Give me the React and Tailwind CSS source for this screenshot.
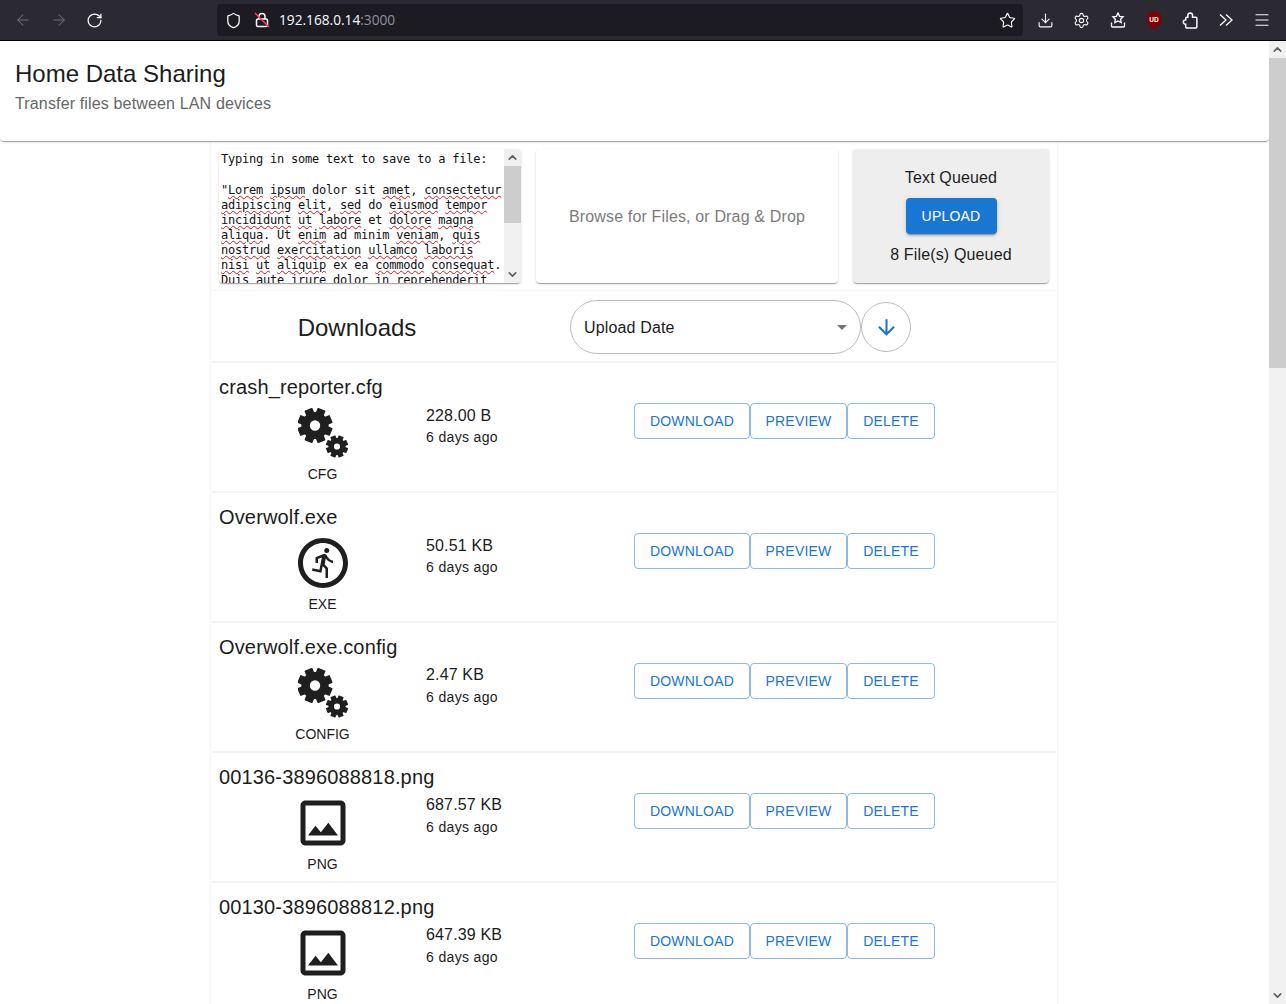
import React from "react";
import { ArrowLeft, ArrowRight, RotateCw, Shield, Star, Download, Settings, Menu, ChevronUp, ChevronDown } from "lucide-react";
import { MdOutlineImage, MdOutlineRunCircle, MdArrowDownward } from "react-icons/md";

const sans = "[font-family:'Liberation_Sans',Arial,sans-serif]";

function Gear({ cx, cy, r, hole, tooth }) {
  return (
    <g>
      {[0, 45, 90, 135, 180, 225, 270, 315].map((a) => (
        <rect key={a} x={cx - tooth / 2} y={cy - r - tooth * 0.46} width={tooth} height={tooth} rx={tooth * 0.1} transform={`rotate(${a + 22.5} ${cx} ${cy})`} fill="#1f1f1f" />
      ))}
      <circle cx={cx} cy={cy} r={(r + hole) / 2} fill="none" stroke="#1f1f1f" strokeWidth={r - hole} />
    </g>
  );
}

function Gears() {
  return (
    <svg width="50" height="50" viewBox="0 0 50 50">
      <Gear cx={17} cy={17.5} r={13.6} hole={5.2} tooth={8.5} />
      <Gear cx={39} cy={38.5} r={8.6} hole={3.1} tooth={5.4} />
    </svg>
  );
}

function Bar() {
  return (
    <div className="h-[41px] shrink-0 flex items-center bg-[#2b2a33] border-b border-black text-[#fbfbfe]">
      <div className="w-[217px] flex items-center pl-[14px] gap-[18px]">
        <ArrowLeft size={18} strokeWidth={1.4} className="text-[#6f6e76]" />
        <ArrowRight size={18} strokeWidth={1.4} className="text-[#6f6e76]" />
        <RotateCw size={17} strokeWidth={1.8} />
      </div>
      <div className="w-[806px] h-[32px] rounded-[4px] bg-[#1c1b22] flex items-center pl-[8px] pr-[7px]">
        <Shield size={17} strokeWidth={1.8} />
        <svg width="16" height="16" viewBox="0 0 16 16" fill="none" stroke="#fbfbfe" strokeWidth="1.5" className="ml-[12px]">
          <rect x="2.5" y="7" width="11" height="7.5" rx="1.5" />
          <path d="M5 7V4.5a3 3 0 0 1 6 0V7" />
          <path d="M1 1l14 14" stroke="#ff3b5c" />
        </svg>
        <span className="ml-[9px] mt-px text-[13.7px] [font-family:'Open_Sans','Liberation_Sans',sans-serif]">
          192.168.0.14<span className="text-[#8f8f9d]">:3000</span>
        </span>
        <Star size={17} strokeWidth={1.6} className="ml-auto" />
      </div>
      <div className="flex-1 flex items-center pl-[14px]">
        <Download size={17} strokeWidth={1.6} />
        <Settings size={17} strokeWidth={1.6} className="ml-[19px]" />
        <svg width="16" height="16" viewBox="0 0 16 16" fill="none" stroke="#fbfbfe" strokeWidth="1.3" className="ml-[20px]">
          <path d="M8 1l1.600 3.300 3.500.5-2.500 2.400.6 3.400L8 9l-3.200 1.600.6-3.400L2.900 4.800l3.500-.5z" />
          <path d="M1.500 10.500v3.500a1 1 0 0 0 1 1h11a1 1 0 0 0 1-1v-3.500" />
        </svg>
        <svg width="16" height="18" viewBox="0 0 16 18" className="ml-[20px]">
          <path d="M8 0l7 2.300v7.500c0 4-3.500 6.600-7 8.200-3.500-1.600-7-4.200-7-8.200V2.300z" fill="#800000" />
          <text x="8" y="10.500" textAnchor="middle" fontSize="6.500" fontWeight="700" fill="#fff" fontFamily="Liberation Sans">UD</text>
        </svg>
        <svg width="17" height="17" viewBox="0 0 16 16" fill="none" stroke="#fbfbfe" strokeWidth="1.4" className="ml-[20px]">
          <path d="M5.500 5V3.200a2.200 2.200 0 0 1 4.400 0V5H13a1 1 0 0 1 1 1v8a1 1 0 0 1-1 1H4.500a1 1 0 0 1-1-1v-2.500h-.3a2 2 0 0 1 0-4h.3V6a1 1 0 0 1 1-1z" />
        </svg>
        <svg width="16" height="16" viewBox="0 0 16 16" fill="none" stroke="#fbfbfe" strokeWidth="1.3" className="ml-[19px]">
          <path d="M2 2.500L8 8l-6 5.500M8 2.500L14 8l-6 5.500" />
        </svg>
        <Menu size={18} strokeWidth={1.6} className="ml-[19px]" />
      </div>
    </div>
  );
}

const W = ({ children }) => <span className="underline decoration-wavy decoration-[#e0101c] decoration-1 underline-offset-1">{children}</span>;

function Editor() {
  return (
    <div className="w-[302px] h-[134px] rounded-[4px] bg-white flex overflow-hidden shadow-[0_2px_1px_-1px_rgba(0,0,0,0.2),0_1px_1px_0_rgba(0,0,0,0.14),0_1px_3px_0_rgba(0,0,0,0.12)]">
      <div className="flex-1 pl-[2px] pt-[3px] text-[12px] tracking-[-0.22px] leading-[15px] whitespace-pre text-[#111] [font-family:'DejaVu_Sans_Mono',monospace] overflow-hidden">
        <div>Typing in some text to save to a file:</div>
        <div className="h-[16px]">&nbsp;</div>
        <div>"<W>Lorem</W> <W>ipsum</W> dolor sit <W>amet</W>, <W>consectetur</W></div>
        <div><W>adipiscing</W> <W>elit</W>, <W>sed</W> do <W>eiusmod</W> <W>tempor</W></div>
        <div><W>incididunt</W> <W>ut</W> <W>labore</W> et <W>dolore</W> <W>magna</W></div>
        <div><W>aliqua</W>. Ut <W>enim</W> ad minim <W>veniam</W>, <W>quis</W></div>
        <div><W>nostrud</W> <W>exercitation</W> <W>ullamco</W> <W>laboris</W></div>
        <div><W>nisi</W> <W>ut</W> <W>aliquip</W> ex ea <W>commodo</W> <W>consequat</W>.</div>
        <div>Duis aute irure dolor in <W>reprehenderit</W></div>
      </div>
      <div className="w-[17px] shrink-0 bg-[#f0f0f0] flex flex-col items-center">
        <div className="h-[17px] flex items-center"><ChevronUp size={13} strokeWidth={3} className="text-[#606060]" /></div>
        <div className="w-full h-[57px] bg-[#cdcdcd]" />
        <div className="mt-auto h-[17px] flex items-center"><ChevronDown size={13} strokeWidth={3} className="text-[#606060]" /></div>
      </div>
    </div>
  );
}

const files = [
  { name: "crash_reporter.cfg", size: "228.00 B", ext: "CFG", icon: "gear" },
  { name: "Overwolf.exe", size: "50.51 KB", ext: "EXE", icon: "run" },
  { name: "Overwolf.exe.config", size: "2.47 KB", ext: "CONFIG", icon: "gear", up: true },
  { name: "00136-3896088818.png", size: "687.57 KB", ext: "PNG", icon: "img", up: true },
  { name: "00130-3896088812.png", size: "647.39 KB", ext: "PNG", icon: "img", up: true },
];

function FileBtn({ w, children }) {
  return (
    <button className={`${w} h-[36px] rounded-[4px] border border-[#1976d2]/50 text-[#1976d2] text-[14px] tracking-[0.2px] uppercase flex items-center justify-center`}>
      {children}
    </button>
  );
}

function Row({ f }) {
  return (
    <div className="h-[128px] mt-[2px] bg-white shadow-[0_0_2px_rgba(0,0,0,0.13)] pl-[8px] pt-[12px] text-[#1c1c1c]">
      <div className="h-[24px] text-[20px] leading-[24px] tracking-[0.15px]">{f.name}</div>
      <div className="flex">
        <div className="w-[207px] flex flex-col items-center">
          <div className="h-[50px] w-[50px] mt-[9px] flex items-center justify-center">
            {f.icon === "gear" && <Gears />}
            {f.icon === "run" && <MdOutlineRunCircle size={60} className="text-[#1f1f1f] shrink-0" />}
            {f.icon === "img" && <MdOutlineImage size={60} className="text-[#1f1f1f] shrink-0" />}
          </div>
          <div className="mt-[8px] text-[14px] leading-[16px]">{f.ext}</div>
        </div>
        <div className={`w-[208px] ${f.up ? "pt-[7px]" : "pt-[8px]"}`}>
          <div className="text-[16px] leading-[18px] tracking-[0.15px]">{f.size}</div>
          <div className={`${f.up ? "mt-[5px]" : "mt-[4px]"} text-[14px] leading-[16px] tracking-[0.35px]`}>6 days ago</div>
        </div>
        <div className="flex mt-[4px]">
          <FileBtn w="w-[116px]">Download</FileBtn>
          <FileBtn w="w-[97px]">Preview</FileBtn>
          <FileBtn w="w-[88px]">Delete</FileBtn>
        </div>
      </div>
    </div>
  );
}

export default function App() {
  return (
    <div className={`h-[1004px] overflow-hidden flex flex-col bg-white ${sans}`}>
      <Bar />
      <div className="flex-1 flex min-h-0">
        <div className="flex-1 min-w-0 overflow-hidden">
          <header className="h-[100px] bg-white rounded-b-[4px] pl-[15px] pt-[17px] relative z-10 shadow-[0_2px_1px_-1px_rgba(0,0,0,0.2),0_1px_1px_0_rgba(0,0,0,0.14),0_1px_3px_0_rgba(0,0,0,0.12)]">
            <h1 className="text-[24px] leading-[32px] text-[#1c1c1c]">Home Data Sharing</h1>
            <p className="mt-[2px] text-[16px] leading-[24px] tracking-[0.15px] text-[#666]">Transfer files between LAN devices</p>
          </header>
          <main className="w-[846px] ml-[211px]">
            <section className="h-[150px] bg-white p-[8px] flex gap-[15px] shadow-[0_0_2px_rgba(0,0,0,0.13)]">
              <Editor />
              <div className="w-[302px] h-[134px] pt-px rounded-[4px] bg-white flex items-center justify-center text-[16px] tracking-[0.15px] text-[#7b7b7b] shadow-[0_2px_1px_-1px_rgba(0,0,0,0.2),0_1px_1px_0_rgba(0,0,0,0.14),0_1px_3px_0_rgba(0,0,0,0.12)]">
                Browse for Files, or Drag &amp; Drop
              </div>
              <div className="w-[196px] h-[134px] rounded-[4px] bg-[#eeeeee] flex flex-col items-center pt-[19px] text-[16px] leading-[20px] tracking-[0.15px] text-[#1c1c1c] shadow-[0_2px_1px_-1px_rgba(0,0,0,0.2),0_1px_1px_0_rgba(0,0,0,0.14),0_1px_3px_0_rgba(0,0,0,0.12)]">
                <div>Text Queued</div>
                <button className="w-[91px] h-[36px] mt-[10px] rounded-[4px] bg-[#1976d2] text-white text-[14px] tracking-[0.2px] shadow-[0_3px_1px_-2px_rgba(0,0,0,0.2),0_2px_2px_0_rgba(0,0,0,0.14),0_1px_5px_0_rgba(0,0,0,0.12)]">UPLOAD</button>
                <div className="mt-[11px]">8 File(s) Queued</div>
              </div>
            </section>
            <section className="h-[70px] pt-[2px] bg-white flex items-center shadow-[0_0_2px_rgba(0,0,0,0.13)]">
              <div className="w-[359px] text-center pr-[67px] pt-px text-[24px] leading-[32px] text-[#1c1c1c] whitespace-nowrap">Downloads</div>
              <div className="w-[291px] h-[54px] rounded-[28px] border border-[#bdbdbd] flex items-center pl-[13px] pr-[13px] pt-px text-[16px] tracking-[0.15px] text-[#1c1c1c]">
                Upload Date
                <span className="ml-auto w-0 h-0 border-x-[5px] border-x-transparent border-t-[5px] border-t-[#757575]" />
              </div>
              <button className="w-[50px] h-[50px] rounded-full border border-[#bdbdbd] flex items-center justify-center">
                <MdArrowDownward size={25} className="text-[#1976d2]" />
              </button>
            </section>
            {files.map((f) => <Row key={f.name} f={f} />)}
          </main>
        </div>
        <div className="w-[17px] shrink-0 bg-[#f0f0f0] flex flex-col items-center">
          <div className="h-[17px] flex items-center"><ChevronUp size={13} strokeWidth={3} className="text-[#606060]" /></div>
          <div className="w-full h-[310px] bg-[#cdcdcd]" />
          <div className="mt-auto h-[17px] flex items-center"><ChevronDown size={13} strokeWidth={3} className="text-[#606060]" /></div>
        </div>
      </div>
    </div>
  );
}
